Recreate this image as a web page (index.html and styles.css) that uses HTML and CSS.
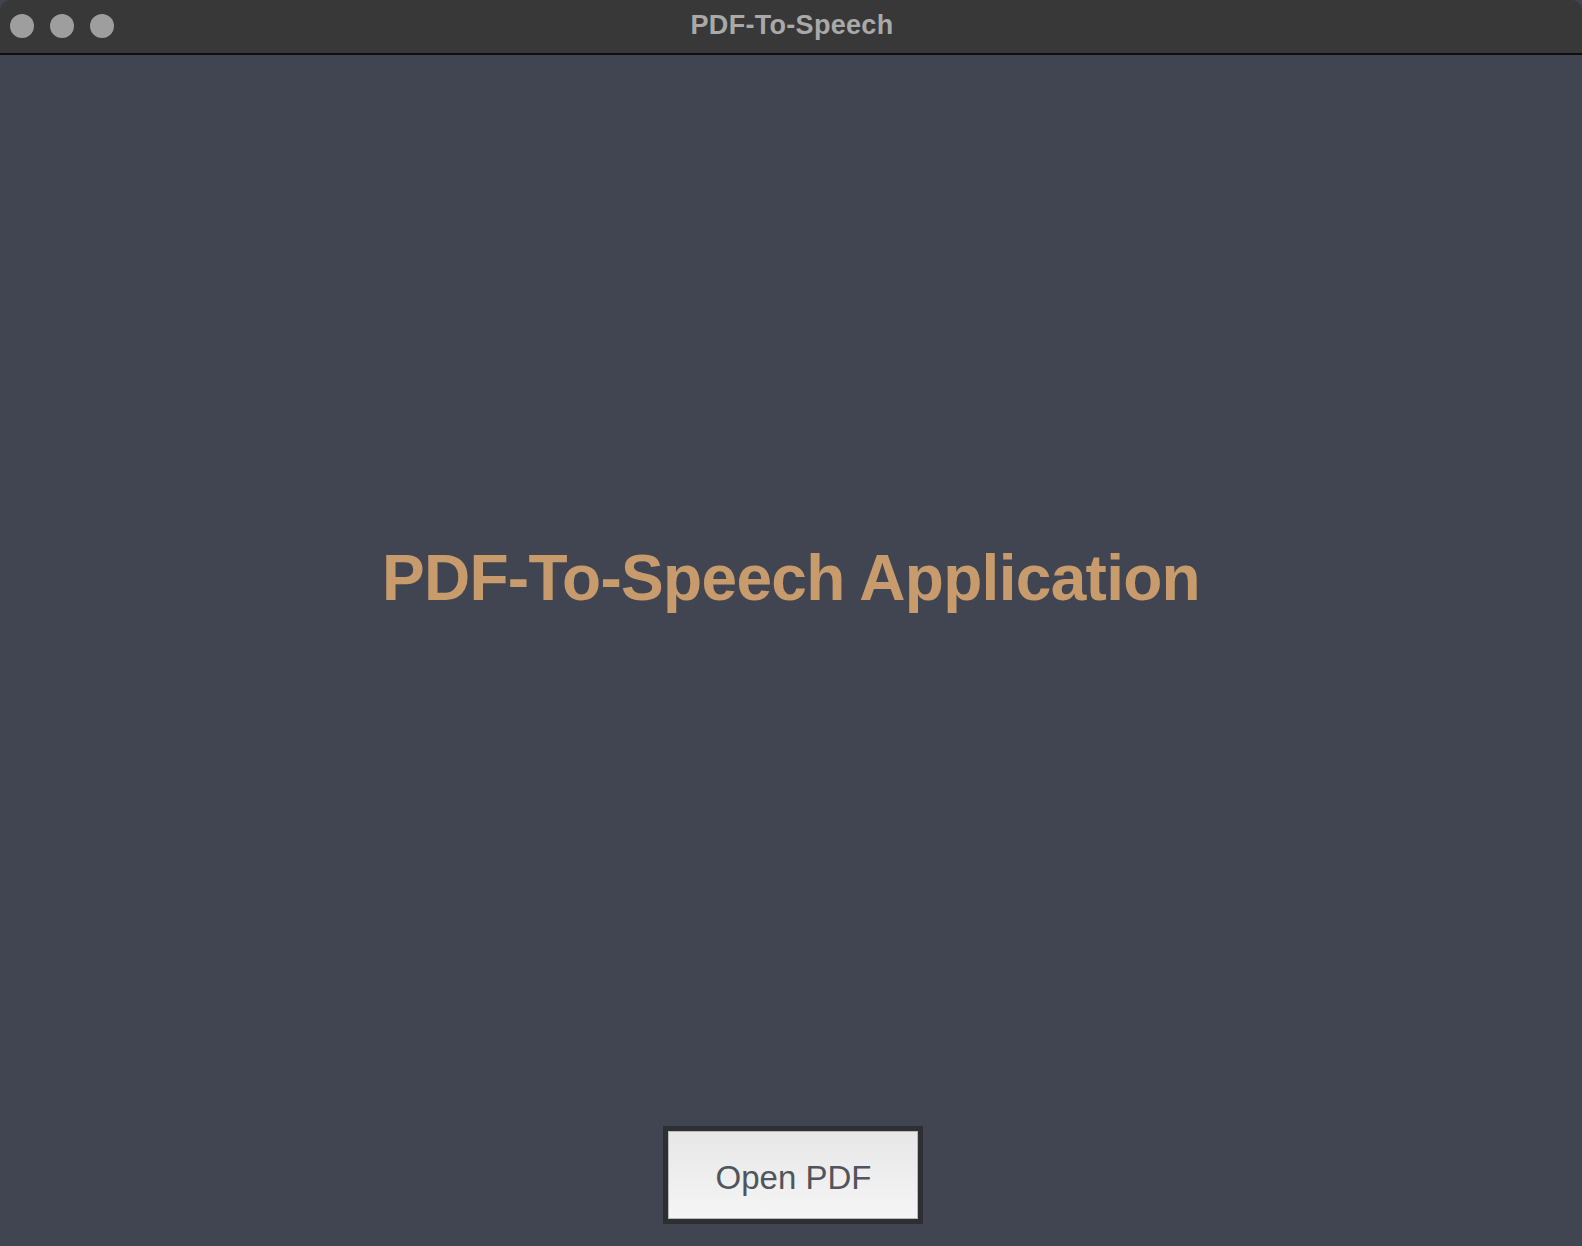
FILE: index.html
```html
<!DOCTYPE html>
<html>
<head>
<meta charset="utf-8">
<link rel="stylesheet" href="styles.css">
</head>
<body>
<div class="window">
  <div class="titlebar">
    <div class="lights">
      <span class="light"></span>
      <span class="light"></span>
      <span class="light"></span>
    </div>
    <div class="title">PDF-To-Speech</div>
  </div>
  <div class="content">
    <div class="hero">
      <h1 class="heading">PDF-To-Speech Application</h1>
    </div>
    <div class="actions">
      <button class="btn">Open PDF</button>
    </div>
  </div>
</div>
</body>
</html>
```
FILE: styles.css
```css
html, body {
  margin: 0;
  padding: 0;
  height: 100%;
  background: #414551;
}
.window {
  height: 1246px;
  display: flex;
  flex-direction: column;
  font-family: "Liberation Sans", Arial, sans-serif;
}
.titlebar {
  height: 53px;
  flex: none;
  background: #383838;
  border-bottom: 2px solid #0e0e0e;
  border-top-left-radius: 10px;
  border-top-right-radius: 10px;
  position: relative;
  display: flex;
  align-items: center;
  justify-content: center;
}
.lights {
  position: absolute;
  left: 10px;
  top: 14px;
  display: flex;
  gap: 16px;
}
.light {
  width: 24px;
  height: 24px;
  border-radius: 50%;
  background: #9e9e9e;
}
.title {
  color: #a9a9a9;
  font-weight: bold;
  font-size: 27px;
  letter-spacing: 0.3px;
  margin-left: 2px;
  margin-top: -3px;
}
.content {
  flex: 1;
  display: flex;
  flex-direction: column;
}
.hero {
  flex: 1;
  display: flex;
  align-items: center;
  justify-content: center;
  padding-bottom: 26px;
}
.heading {
  margin: 0;
  color: #c89b6d;
  font-size: 64px;
  font-weight: bold;
  letter-spacing: -0.7px;
}
.actions {
  display: flex;
  justify-content: center;
  padding-bottom: 22px;
}
.btn {
  width: 260px;
  height: 98px;
  box-sizing: border-box;
  border: 5px solid #2e2f33;
  outline: none;
  box-shadow: inset 0 0 0 1px #b9b9b9;
  background: linear-gradient(#e7e7e7, #f5f5f5);
  color: #50545c;
  font-family: "Liberation Sans", Arial, sans-serif;
  font-size: 33px;
  padding: 6px 0 0 2px;
  margin-left: 3px;
}
```
